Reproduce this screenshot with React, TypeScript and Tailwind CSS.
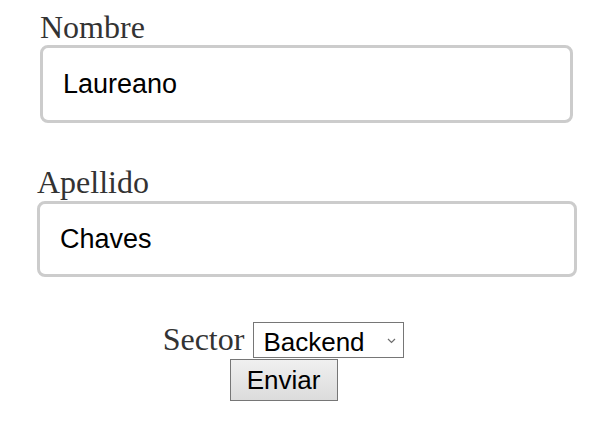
export default function App() {
  return (
    <div className="min-h-[428px] w-[610px] bg-white font-['Liberation_Serif',serif] text-[#333]">
      <div className="pt-[9px] pl-[40px]">
        <label className="block text-[32px] leading-[36px]">Nombre</label>
        <div className="flex h-[78px] w-[533px] items-center rounded-lg border-[3px] border-[#cccccc] pl-[20px] font-['Liberation_Sans',sans-serif] text-[27px] text-black">
          Laureano
        </div>
      </div>

      <div className="mt-[41px] pl-[37px]">
        <label className="block text-[32px] leading-[36px]">Apellido</label>
        <div className="mt-[1px] flex h-[76px] w-[540px] items-center rounded-lg border-[3px] border-[#cccccc] pl-[20px] font-['Liberation_Sans',sans-serif] text-[27px] text-black">
          Chaves
        </div>
      </div>

      <div className="mt-[44px] flex w-[567px] flex-col items-center">
        <div className="flex items-center gap-[9px]">
          <span className="pb-[2px] text-[32px] leading-[36px]">Sector</span>
          <div className="relative">
            <select
              defaultValue="backend"
              className="h-[36px] w-[151px] appearance-none border border-[#767676] bg-white pl-[9px] font-['Liberation_Sans',sans-serif] text-[26px] text-black"
            >
              <option value="backend">Backend</option>
              <option value="frontend">Frontend</option>
            </select>
            <svg
              className="pointer-events-none absolute right-[8px] top-[16px]"
              width="9"
              height="6"
              viewBox="0 0 9 6"
            >
              <path d="M1 1 L4.5 4.5 L8 1" fill="none" stroke="#6d6d6d" strokeWidth="1.2" />
            </svg>
          </div>
        </div>
        <button className="h-[42px] w-[108px] border border-[#767676] bg-gradient-to-b from-[#f0f0f0] to-[#dcdcdc] font-['Liberation_Sans',sans-serif] text-[26px] text-black">
          Enviar
        </button>
      </div>
    </div>
  )
}
